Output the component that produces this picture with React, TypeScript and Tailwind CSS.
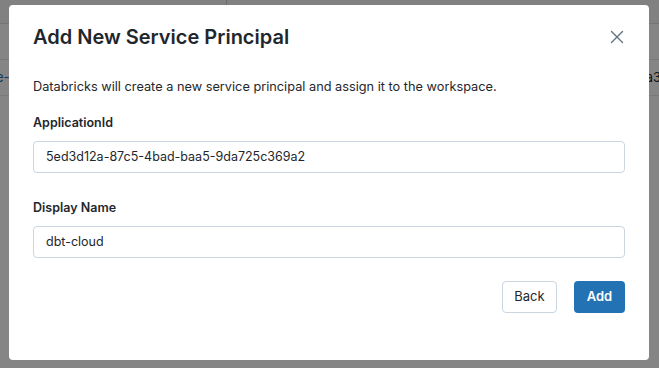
import React from "react";

function CloseIcon() {
    return (
        <svg width="14" height="14" viewBox="0 0 14 14" fill="none">
            <path d="M1.5 1.5L12.5 12.5M12.5 1.5L1.5 12.5" stroke="#5f7281" strokeWidth="1.4" strokeLinecap="round" />
        </svg>
    );
}

function Field({ label, value }: { label: string; value: string }) {
    return (
        <div className="flex flex-col">
            <label className="text-[12.5px] leading-[20px] font-semibold text-[#1f272d]">{label}</label>
            <div className="mt-[8px] h-[32px] rounded-[4px] border border-[#cbd5e0] px-3 flex items-center text-[12.5px] text-[#1f272d]">
                {value}
            </div>
        </div>
    );
}

export default function App() {
    return (
        <div className="relative w-[659px] h-[368px] overflow-hidden bg-white" style={{ fontFamily: "Inter, 'Noto Sans', sans-serif" }}>
            {/* page behind the dialog */}
            <div className="flex flex-col text-[13px] text-[#1f272d]">
                <div className="h-[24px] bg-[#f7f7f7] border-b border-[#e0e0e0] flex">
                    <div className="w-[227px] border-r border-[#d0d0d0]" />
                    <div className="flex-1" />
                </div>
                <div className="h-[36px] border-b border-[#e8e8e8]" />
                <div className="h-[36px] border-b border-[#e8e8e8] flex items-center justify-between">
                    <span className="text-[#2272b4] -ml-[4px]">e-c</span>
                    <span className="-mr-[2px]">a3</span>
                </div>
            </div>
            <div className="absolute inset-0 bg-black/[0.48]" />

            {/* dialog */}
            <div className="absolute left-[9px] top-[5px] w-[640px] h-[355px] bg-white rounded-[4px] px-6 pt-[18px]">
                <div className="flex items-start justify-between">
                    <h2 className="text-[20px] leading-[28px] font-semibold text-[#1f272d]">Add New Service Principal</h2>
                    <button className="mt-[7px] mr-[1px]"><CloseIcon /></button>
                </div>
                <p className="mt-[26px] text-[12.75px] leading-[20px] text-[#1f272d]">
                    Databricks will create a new service principal and assign it to the workspace.
                </p>
                <div className="mt-[16px]">
                    <Field label="ApplicationId" value="5ed3d12a-87c5-4bad-baa5-9da725c369a2" />
                </div>
                <div className="mt-[25px]">
                    <Field label="Display Name" value="dbt-cloud" />
                </div>
                <div className="mt-[23px] flex justify-end gap-[17px]">
                    <button className="h-[32px] w-[55px] rounded-[4px] border border-[#cbd5e0] text-[13px] text-[#1f272d] bg-white">Back</button>
                    <button className="h-[32px] w-[51px] rounded-[4px] bg-[#2272b4] text-[13px] font-semibold text-white">Add</button>
                </div>
            </div>
        </div>
    );
}
